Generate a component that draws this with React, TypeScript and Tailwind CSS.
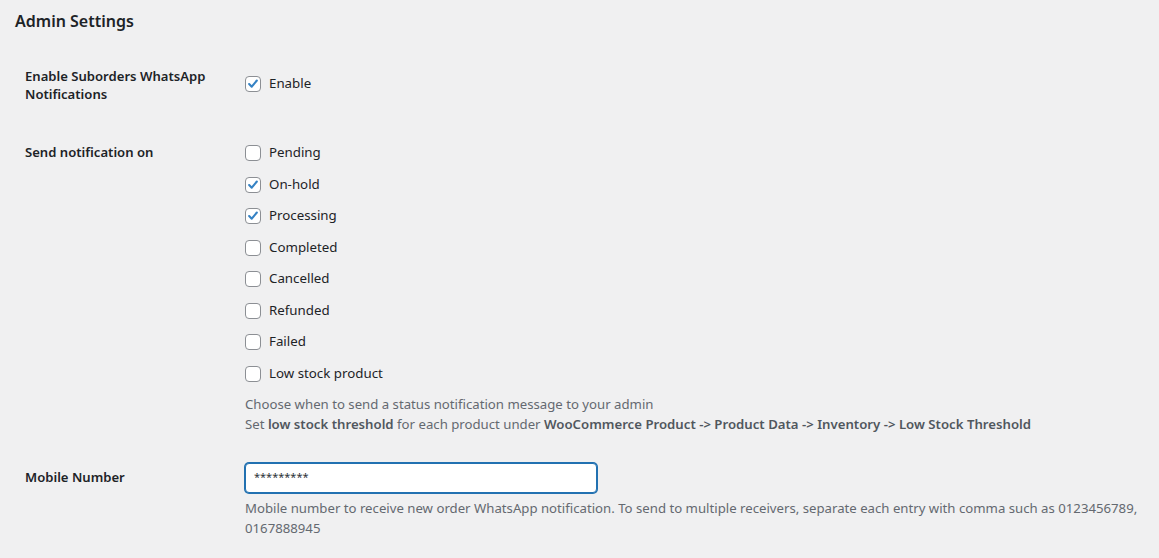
import { useState } from "react";

const statuses = [
  { label: "Pending", checked: false },
  { label: "On-hold", checked: true },
  { label: "Processing", checked: true },
  { label: "Completed", checked: false },
  { label: "Cancelled", checked: false },
  { label: "Refunded", checked: false },
  { label: "Failed", checked: false },
  { label: "Low stock product", checked: false },
];

function Checkbox({ label, checked }: { label: string; checked: boolean }) {
  const [on, setOn] = useState(checked);
  return (
    <label className="flex h-5 items-center cursor-pointer" onClick={() => setOn(!on)}>
      <span className="flex h-4 w-4 items-center justify-center rounded-[4px] border border-[#8c8f94] bg-white">
        {on && (
          <svg viewBox="0 0 20 20" className="h-[18px] w-[18px]">
            <path d="M4.5 10 L8.2 13.8 L15.5 5" fill="none" stroke="#3582c4" strokeWidth="3" strokeLinecap="round" strokeLinejoin="round" />
          </svg>
        )}
      </span>
      <span className="ml-2 text-[13.3px] text-[#1d2327]">{label}</span>
    </label>
  );
}

export default function App() {
  return (
    <div className="min-h-[558px] w-full bg-[#f0f0f1] text-[#1d2327]" style={{ fontFamily: '"Noto Sans", "Open Sans", sans-serif' }}>
      <h2 className="pl-[15px] pt-[9px] text-[16px] font-semibold leading-[24px]">Admin Settings</h2>

      {/* Enable row */}
      <div className="mt-[34px] flex pl-[25px]">
        <div className="w-[220px] pr-4 text-[13.1px] font-semibold leading-[18px]">
          Enable Suborders WhatsApp Notifications
        </div>
        <div className="pt-[7px]">
          <Checkbox label="Enable" checked={true} />
        </div>
      </div>

      {/* Statuses row */}
      <div className="mt-[40px] flex pl-[25px]">
        <div className="w-[220px] text-[13.1px] font-semibold leading-[18px]">Send notification on</div>
        <div className="flex-1 pr-[10px]">
          <div className="flex flex-col gap-[11.5px]">
            {statuses.map((s) => (
              <Checkbox key={s.label} label={s.label} checked={s.checked} />
            ))}
          </div>
          <p className="mt-[10.5px] text-[13.2px] leading-[20px] text-[#646970]">
            Choose when to send a status notification message to your admin
            <br />
            Set <b className="font-semibold text-[#50575e]">low stock threshold</b> for each product under{" "}
            <b className="font-semibold text-[#50575e]">WooCommerce Product -&gt; Product Data -&gt; Inventory -&gt; Low Stock Threshold</b>
          </p>
        </div>
      </div>

      {/* Mobile row */}
      <div className="mt-[29px] flex pl-[25px]">
        <div className="w-[220px] pt-[5px] text-[13.1px] font-semibold leading-[18px]">Mobile Number</div>
        <div className="flex-1 pr-[10px]">
          <input
            type="text"
            defaultValue="*********"
            className="h-[30px] w-[352px] rounded-[4px] border border-[#2271b1] bg-white px-2 pb-[3px] text-[11px] text-[#2c3338] shadow-[0_0_0_1px_#2271b1] outline-none"
          />
          <p className="mt-[5px] text-[13.2px] leading-[20px] text-[#646970]">
            Mobile number to receive new order WhatsApp notification. To send to multiple receivers, separate each entry with comma such as 0123456789, 0167888945
          </p>
        </div>
      </div>
    </div>
  );
}
